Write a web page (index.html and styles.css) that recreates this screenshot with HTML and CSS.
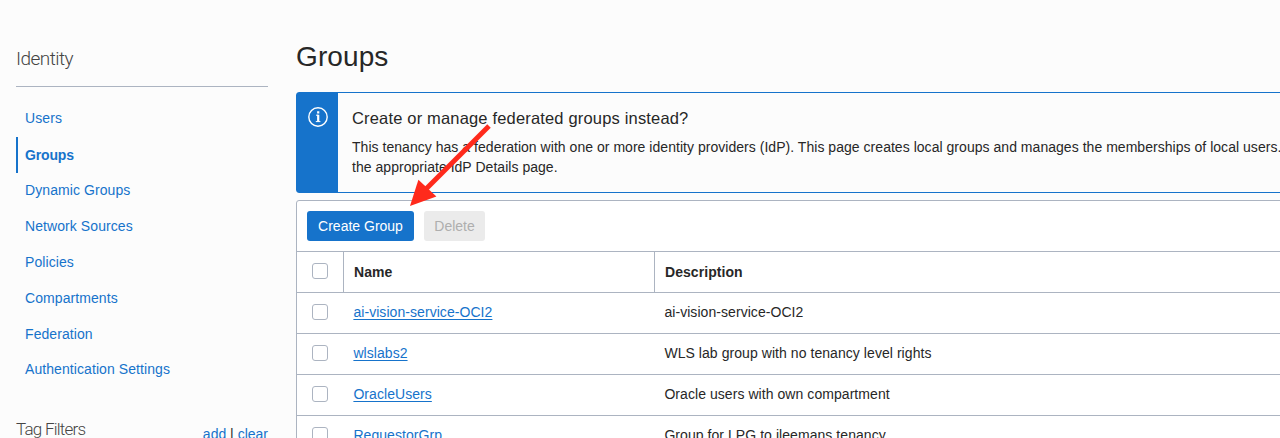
FILE: index.html
```html
<!DOCTYPE html>
<html lang="en">
<head>
<meta charset="utf-8">
<title>Groups</title>
<link rel="stylesheet" href="styles.css">
</head>
<body>
<div class="page">
  <aside class="sidebar">
    <h2 class="side-title">Identity</h2>
    <nav class="nav">
      <a class="nav-item"><span>Users</span></a>
      <a class="nav-item active"><span>Groups</span></a>
      <a class="nav-item"><span>Dynamic Groups</span></a>
      <a class="nav-item"><span>Network Sources</span></a>
      <a class="nav-item"><span>Policies</span></a>
      <a class="nav-item"><span>Compartments</span></a>
      <a class="nav-item"><span>Federation</span></a>
      <a class="nav-item last"><span>Authentication Settings</span></a>
    </nav>
    <div class="filters">
      <h2 class="filters-title">Tag Filters</h2>
      <div class="filters-links"><a class="link">add</a> | <a class="link">clear</a></div>
    </div>
  </aside>
  <main class="main">
    <h1 class="title">Groups</h1>
    <section class="alert">
      <div class="alert-icon">
        <svg width="20" height="20" viewBox="0 0 20 20" fill="none" stroke="#fff">
          <circle cx="10" cy="10" r="9.2" stroke-width="1.4"/>
          <path d="M8 8.2h2.2M7.8 14.6h4.6" stroke-width="1"/>
          <path d="M10.2 7.7v6.9M10.2 4.3v2.1" stroke-width="2.2"/>
        </svg>
      </div>
      <div class="alert-body">
        <h3 class="alert-title">Create or manage federated groups instead?</h3>
        <p class="alert-text">This tenancy has a federation with one or more identity providers (IdP). This page creates local groups and manages the memberships of local users.<br>the appropriate IdP Details page.</p>
      </div>
    </section>
    <section class="panel">
      <div class="toolbar">
        <button class="btn primary">Create Group</button>
        <button class="btn disabled" disabled>Delete</button>
      </div>
      <div class="row head">
        <div class="cell check"><span class="box"></span></div>
        <div class="cell name">Name</div>
        <div class="cell desc">Description</div>
      </div>
      <div class="row">
        <div class="cell check"><span class="box"></span></div>
        <div class="cell name"><a class="link under">ai-vision-service-OCI2</a></div>
        <div class="cell desc">ai-vision-service-OCI2</div>
      </div>
      <div class="row">
        <div class="cell check"><span class="box"></span></div>
        <div class="cell name"><a class="link under">wlslabs2</a></div>
        <div class="cell desc">WLS lab group with no tenancy level rights</div>
      </div>
      <div class="row">
        <div class="cell check"><span class="box"></span></div>
        <div class="cell name"><a class="link under">OracleUsers</a></div>
        <div class="cell desc">Oracle users with own compartment</div>
      </div>
      <div class="row">
        <div class="cell check"><span class="box"></span></div>
        <div class="cell name"><a class="link under">RequestorGrp</a></div>
        <div class="cell desc">Group for LPG to jleemans tenancy</div>
      </div>
    </section>
  </main>
  <svg class="arrow" width="90" height="90" viewBox="405 120 90 90">
    <path d="M489 126 425 190" stroke="#ff2a1c" stroke-width="5"/>
    <path d="M410 206 418.4 179.8 436.4 196.6Z" fill="#ff2a1c"/>
  </svg>
</div>
</body>
</html>
```

FILE: styles.css
```css
* { box-sizing: border-box; }
body {
  margin: 0;
  background: #fcfcfc;
  color: #272727;
  font: 14px/20px "Liberation Sans", Arial, sans-serif;
}
h1, h2, h3, p { margin: 0; font-weight: 400; }
.page {
  position: relative;
  display: flex;
  gap: 28px;
  width: 1280px;
  height: 438px;
  padding-left: 16px;
  overflow: hidden;
}
.sidebar { flex: none; width: 252px; padding-top: 43px; }
.side-title, .filters-title {
  font: 300 19px/32px Roboto, "Liberation Sans", sans-serif;
  letter-spacing: -0.55px;
  color: #444;
}
.side-title { height: 44px; border-bottom: 1px solid #acb4c1; }
.nav { padding-top: 14px; }
.nav-item {
  display: flex;
  align-items: center;
  height: 36px;
  padding: 0 0 2px 9px;
  color: #1673cb;
  letter-spacing: 0.08px;
}
.nav-item.last { padding-bottom: 4px; }
.nav-item.active {
  padding: 0 0 0 7px;
  border-left: 2px solid #1673cb;
  font-weight: 700;
  letter-spacing: -0.15px;
}
.filters {
  display: flex;
  justify-content: space-between;
  align-items: flex-start;
  padding-top: 24px;
  white-space: nowrap;
}
.filters-title { font-size: 17px; letter-spacing: -0.75px; }
.filters-links { padding-top: 11px; }
.link { color: #1673cb; }
.under { text-decoration: underline; text-underline-offset: 2px; text-decoration-thickness: 1px; }
.main { flex: none; width: 1000px; padding-top: 38px; }
.title { height: 54px; font-size: 28px; line-height: 38px; letter-spacing: 0.1px; }
.alert {
  display: flex;
  height: 101px;
  border: 1px solid #1673cb;
  border-radius: 3px;
}
.alert-icon {
  flex: none;
  width: 41px;
  padding: 14px 0 0 11px;
  background: #1673cb;
}
.alert-icon svg { display: block; }
.alert-body { padding: 13px 14px; white-space: nowrap; }
.alert-title { font-size: 16.5px; line-height: 24px; letter-spacing: 0.17px; }
.alert-text { padding-top: 7px; letter-spacing: 0.035px; }
.panel {
  margin-top: 7px;
  border: 1px solid #acb4c1;
  border-radius: 3px;
  background: #fff;
}
.toolbar { display: flex; gap: 10px; height: 50px; padding: 10px; }
.btn {
  height: 30px;
  padding: 0;
  border: 0;
  border-radius: 3px;
  font: inherit;
}
.primary { width: 107px; background: #1673cb; color: #fff; }
.disabled { width: 61px; background: #ebebeb; color: #aeaeae; }
.row {
  display: grid;
  grid-template-columns: 46px 311px 1fr;
  height: 41px;
  border-top: 1px solid #acb4c1;
}
.cell { display: flex; align-items: center; padding: 0 0 2px 10.4px; letter-spacing: 0.06px; }
.head { font-weight: 700; }
.head .name, .head .desc { padding: 0 0 0 10px; border-left: 1px solid #acb4c1; }
.row .check { padding: 0 0 2px 15px; }
.box { width: 16px; height: 16px; border: 1px solid #acb4c1; border-radius: 3px; background: #fff; }
.arrow { position: absolute; left: 405px; top: 120px; }
```
